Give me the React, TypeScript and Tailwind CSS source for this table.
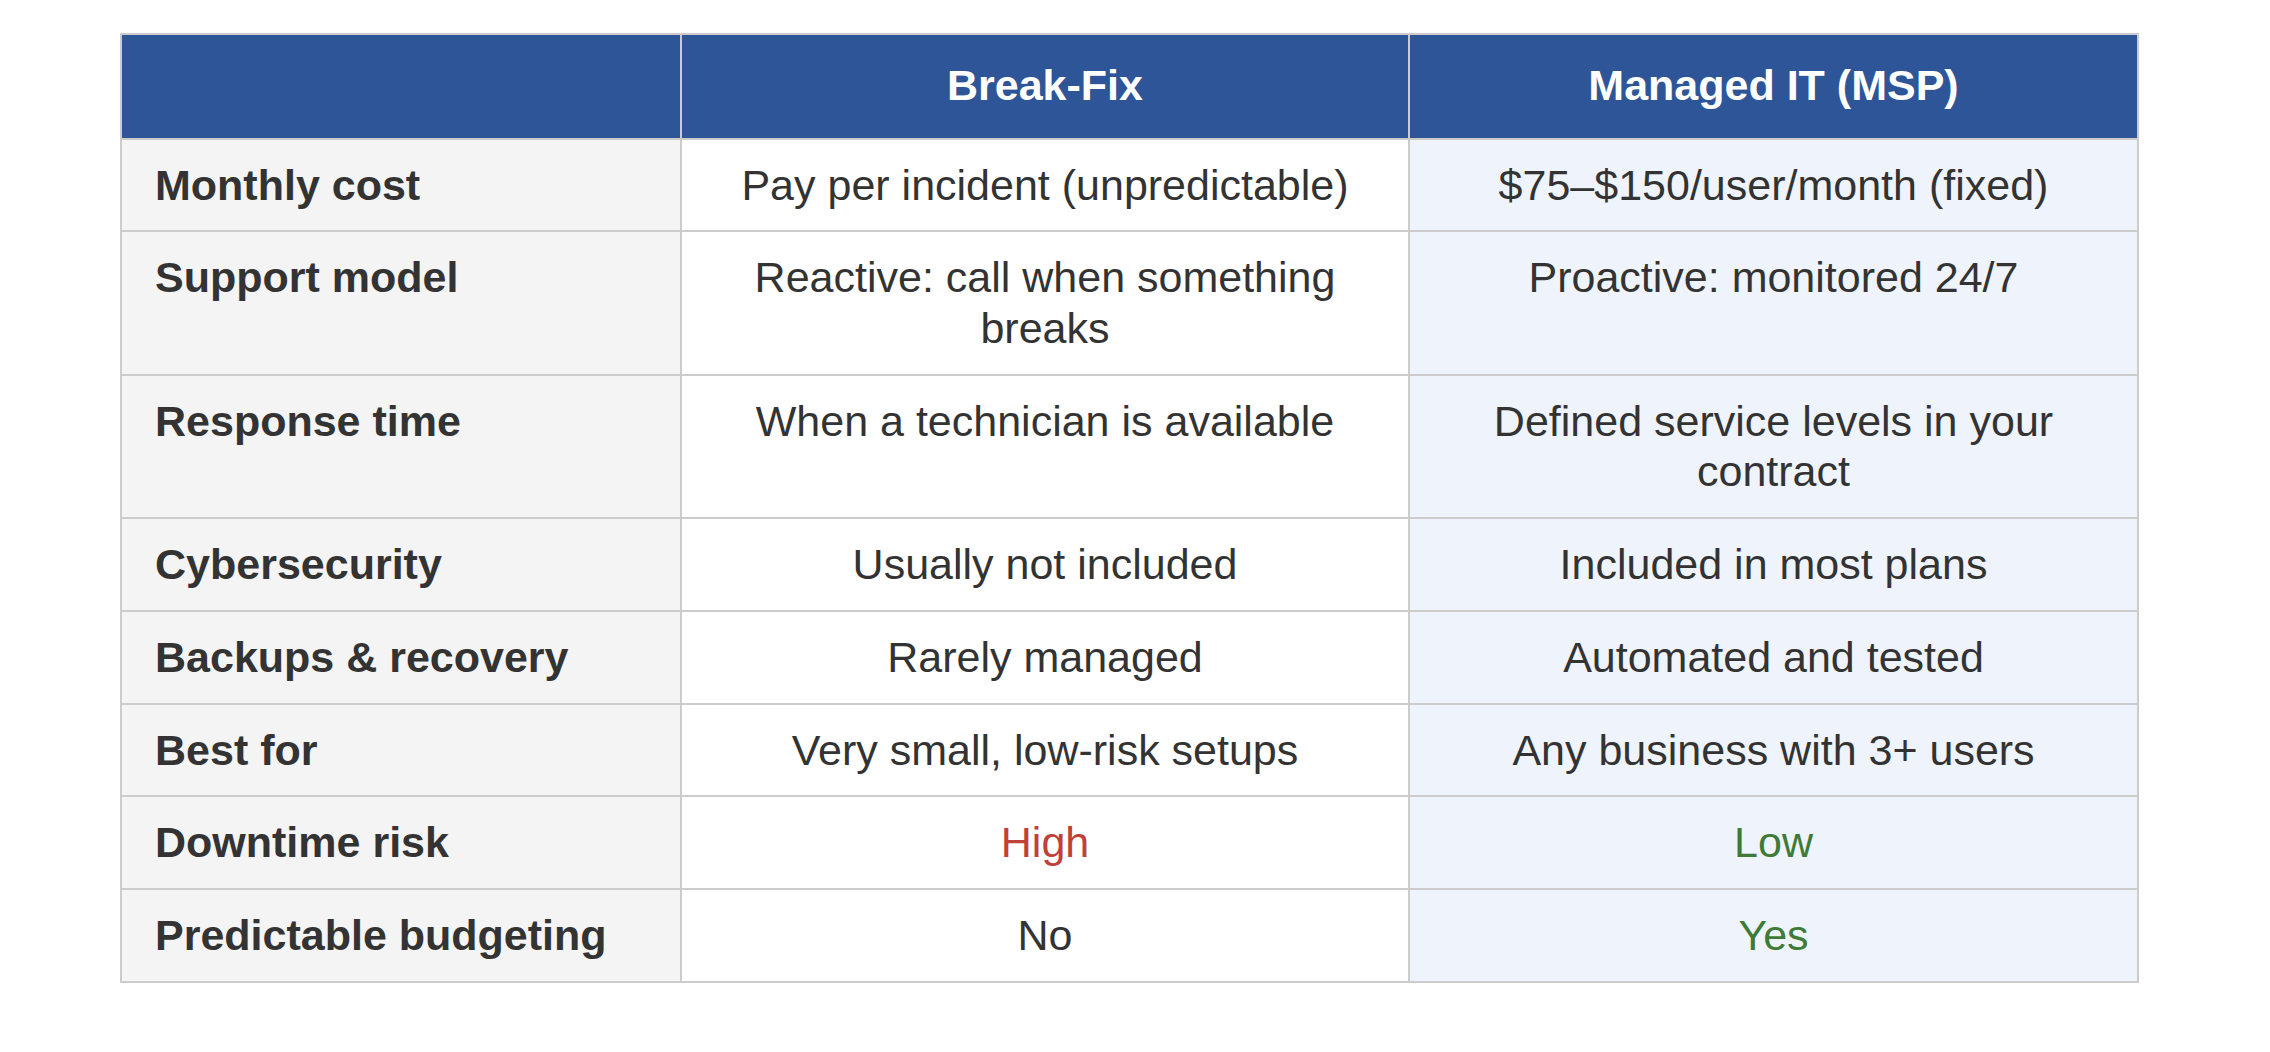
import React from "react";

type Row = {
  label: string;
  a: string;
  b: string;
  aColor?: string;
  bColor?: string;
};

const rows: Row[] = [
  { label: "Monthly cost", a: "Pay per incident (unpredictable)", b: "$75–$150/user/month (fixed)" },
  { label: "Support model", a: "Reactive: call when something breaks", b: "Proactive: monitored 24/7" },
  { label: "Response time", a: "When a technician is available", b: "Defined service levels in your contract" },
  { label: "Cybersecurity", a: "Usually not included", b: "Included in most plans" },
  { label: "Backups & recovery", a: "Rarely managed", b: "Automated and tested" },
  { label: "Best for", a: "Very small, low-risk setups", b: "Any business with 3+ users" },
  { label: "Downtime risk", a: "High", b: "Low", aColor: "red", bColor: "green" },
  { label: "Predictable budgeting", a: "No", b: "Yes", bColor: "green" },
];

function colorClass(c?: string) {
  if (c === "red") return "text-[#c0403a]";
  if (c === "green") return "text-[#3e7b36]";
  return "text-[#333333]";
}

export default function App() {
  return (
    <div className="min-h-[1052px] w-full bg-white pt-[33px] pl-[120px] font-['Liberation_Sans',Arial,sans-serif]">
      <table className="w-[2017px] table-fixed border-collapse text-[43px] leading-[50.6px]">
        <colgroup>
          <col className="w-[560px]" />
          <col className="w-[728px]" />
          <col className="w-[729px]" />
        </colgroup>
        <thead>
          <tr className="bg-[#2e5598] text-white">
            <th className="border-2 border-[#cccccc] pt-[25px] pb-[27px]"></th>
            <th className="border-2 border-[#cccccc] px-[32px] pt-[25px] pb-[27px] text-center font-bold">Break-Fix</th>
            <th className="border-2 border-[#cccccc] px-[32px] pt-[25px] pb-[27px] text-center font-bold">Managed IT (MSP)</th>
          </tr>
        </thead>
        <tbody>
          {rows.map((r) => (
            <tr key={r.label}>
              <td className="border-2 border-[#cccccc] bg-[#f4f4f4] pl-[33px] pr-[20px] pt-[20px] pb-[20.2px] text-left align-top font-bold text-[#333333]">
                {r.label}
              </td>
              <td className={`border-2 border-[#cccccc] bg-white px-[32px] pt-[20px] pb-[20.2px] text-center align-top ${colorClass(r.aColor)}`}>
                {r.a}
              </td>
              <td className={`border-2 border-[#cccccc] bg-[#eff3fb] px-[32px] pt-[20px] pb-[20.2px] text-center align-top ${colorClass(r.bColor)}`}>
                {r.b}
              </td>
            </tr>
          ))}
        </tbody>
      </table>
    </div>
  );
}
